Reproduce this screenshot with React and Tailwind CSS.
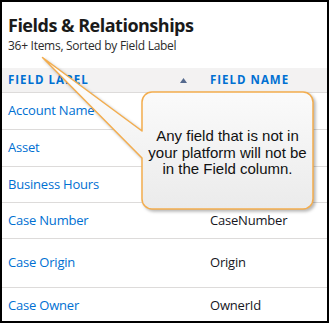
export default function App() {
  const rows = [
    { label: "Account Name", name: "", h: "h-[37px]" },
    { label: "Asset", name: "", h: "h-[37px]" },
    { label: "Business Hours", name: "", h: "h-[36px]" },
    { label: "Case Number", name: "CaseNumber", h: "h-[36px]" },
    { label: "Case Origin", name: "Origin", h: "h-[49px]" },
    { label: "Case Owner", name: "OwnerId", h: "h-[33px] pt-[3px]", last: true },
  ];
  return (
    <div className="relative w-[329px] h-[323px] border-2 border-black bg-white overflow-hidden" style={{ fontFamily: '"Open Sans", sans-serif' }}>
      <div className="px-[6px] pt-[11px] h-[66px]">
        <div className="text-[18px] leading-[24px] font-bold tracking-[-0.5px] text-[#1a1a1a]">Fields &amp; Relationships</div>
        <div className="text-[12px] leading-[16px] tracking-[-0.28px] text-[#2b2b2b] mt-[1px]">36+ Items, Sorted by Field Label</div>
      </div>
      <div className="flex items-center h-[25px] bg-[#f3f2f2] border-b border-[#dddbda] px-[6px]">
        <div className="w-[172px] text-[11.5px] font-bold tracking-[1px] text-[#0070d2]">FIELD LABEL</div>
        <div className="w-[30px] flex items-center">
          <svg width="7" height="5" viewBox="0 0 7 5"><path d="M0 5 L3.5 0 L7 5 Z" fill="#54698d" /></svg>
        </div>
        <div className="text-[11.5px] font-bold tracking-[1px] text-[#0070d2]">FIELD NAME</div>
      </div>
      {rows.map((r) => (
        <div key={r.label} className={`flex items-center ${r.h} ${r.last ? "" : "border-b border-[#dddbda]"} px-[6px] text-[13px] tracking-[-0.2px]`}>
          <div className="w-[202px] text-[#0070d2]">{r.label}</div>
          <div className="text-[#16161d]">{r.name}</div>
        </div>
      ))}
      <svg className="absolute left-0 top-0 drop-shadow-[2px_2px_1.5px_rgba(0,0,0,0.28)]" width="325" height="319" viewBox="2 2 325 319">
        <defs>
          <linearGradient id="cg" x1="0" y1="0" x2="0" y2="1">
            <stop offset="0" stopColor="#ffffff" />
            <stop offset="1" stopColor="#ebebeb" />
          </linearGradient>
        </defs>
        <path
          d="M42.5 57.5 L142 131 L142 102 A10 10 0 0 1 152 92 L303 92 A10 10 0 0 1 313 102 L313 199 A10 10 0 0 1 303 209 L152 209 A10 10 0 0 1 142 199 L142 158 Z"
          fill="url(#cg)"
          stroke="#f3ad4e"
          strokeWidth="1.5"
          strokeLinejoin="round"
        />
      </svg>
      <div className="absolute left-[140px] top-[126px] w-[171px] text-center text-[15px] leading-[16.5px] text-[#111]" style={{ fontFamily: '"Liberation Sans", Arial, sans-serif' }}>
        Any field that is not in<br />your platform will not be<br />in the Field column.
      </div>
    </div>
  );
}
